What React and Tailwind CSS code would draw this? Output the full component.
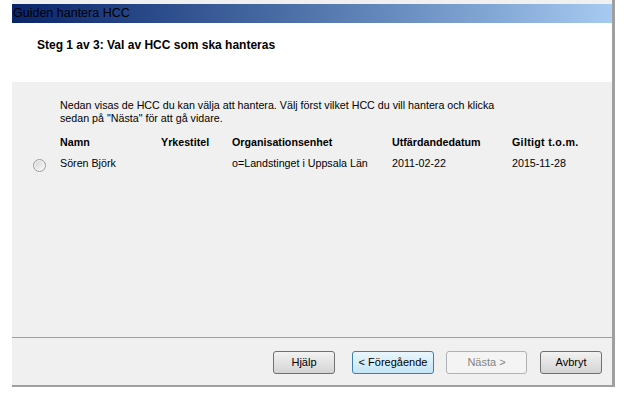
export default function App() {
  const btn =
    "h-[23px] rounded-[3px] border text-[11px] leading-none flex items-center justify-center";
  return (
    <div className="w-[624px] h-[395px] bg-white font-['Liberation_Sans',Arial,sans-serif] text-black">
      <div className="ml-[12px] w-[603px] h-[387px] flex flex-col bg-[#f0f0f0] border-r-[3px] border-b-[2px] border-[#a0a0a0] pt-[4px]">
        <div className="h-[19px] bg-gradient-to-r from-[#0a246a] to-[#a6caf0] flex items-center pl-[1px] text-[12.5px] leading-none text-black">
          Guiden hantera HCC
        </div>

        <div className="h-[59px] bg-white pl-[25px] pt-[15px]">
          <div className="text-[12px] font-bold leading-[14px]">
            Steg 1 av 3: Val av HCC som ska hanteras
          </div>
        </div>

        <div className="flex-1 pt-[17px] text-[10.7px] leading-[13px]">
          <p className="pl-[48px]">
            Nedan visas de HCC du kan välja att hantera. Välj först vilket HCC du vill hantera och klicka
            <br />
            sedan på "Nästa" för att gå vidare.
          </p>

          <div className="mt-[11px] pl-[21px] grid grid-cols-[27px_101px_71px_160px_120px_1fr] font-bold">
            <span />
            <span>Namn</span>
            <span>Yrkestitel</span>
            <span>Organisationsenhet</span>
            <span>Utfärdandedatum</span>
            <span className="tracking-[0.3px]">Giltigt t.o.m.</span>
          </div>

          <div className="mt-[8px] pl-[21px] grid grid-cols-[27px_101px_71px_160px_120px_1fr] items-center">
            <span className="w-[13px] h-[13px] rounded-full border border-[#9a9a9a] bg-[#f4f4f4] flex items-center justify-center translate-y-[2px]">
              <span className="w-[9px] h-[9px] rounded-full bg-gradient-to-br from-[#d6d6d6] to-[#f8f8f8]" />
            </span>
            <span>Sören Björk</span>
            <span />
            <span>o=Landstinget i Uppsala Län</span>
            <span>2011-02-22</span>
            <span>2015-11-28</span>
          </div>
        </div>

        <div className="h-px bg-[#a0a0a0]" />

        <div className="h-[47px] flex justify-end items-start pt-[13px] pr-[10px]">
          <button className={`${btn} w-[62px] border-[#707070] bg-gradient-to-b from-[#f2f2f2] to-[#d4d4d4]`}>
            Hjälp
          </button>
          <button className={`${btn} ml-[17px] w-[82px] border-[#3c7fb1] bg-gradient-to-b from-[#eaf6fd] to-[#c4e5f6]`}>
            &lt; Föregående
          </button>
          <button className={`${btn} ml-[12px] w-[81px] border-[#adb2b5] bg-[#f4f4f4] text-[#838383]`}>
            Nästa &gt;
          </button>
          <button className={`${btn} ml-[13px] w-[62px] border-[#707070] bg-gradient-to-b from-[#f2f2f2] to-[#d4d4d4]`}>
            Avbryt
          </button>
        </div>
      </div>
    </div>
  );
}
